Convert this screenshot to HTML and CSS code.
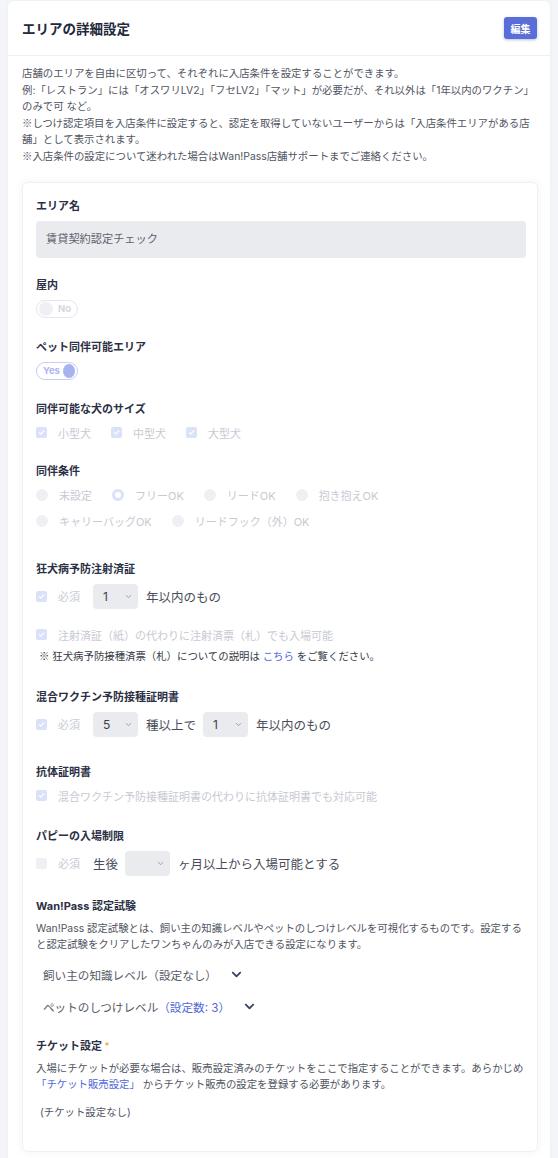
FILE: index.html
```html
<!DOCTYPE html>
<html lang="ja">
<head>
    <meta charset="UTF-8">
    <meta name="viewport" content="width=device-width, initial-scale=1.0">
    <title>エリアの詳細設定</title>
    <link rel="stylesheet" href="styles.css">
</head>
<body>

<div class="panel">
    <div class="panel-header">
        <h1 class="panel-title">エリアの詳細設定</h1>
        <button class="edit-button">編集</button>
    </div>

    <div class="panel-body">
        <p class="intro">
            店舗のエリアを自由に区切って、それぞれに入店条件を設定することができます。<br>
            例:「レストラン」には「オスワリLV2」「フセLV2」「マット」が必要だが、それ以外は「1年以内のワクチン」のみで可 など。<br>
            <span class="kome">※</span>しつけ認定項目を入店条件に設定すると、認定を取得していないユーザーからは「入店条件エリアがある店舗」として表示されます。<br>
            <span class="kome">※</span>入店条件の設定について迷われた場合はWan!Pass店舗サポートまでご連絡ください。
        </p>

        <div class="form-card">
            <div class="field first">
                <div class="field-label">エリア名</div>
                <div class="text-input">賃貸契約認定チェック</div>
            </div>

            <div class="field after-input">
                <div class="field-label">屋内</div>
                <div class="toggle off"><span class="knob"></span><span class="toggle-text">No</span></div>
            </div>

            <div class="field">
                <div class="field-label">ペット同伴可能エリア</div>
                <div class="toggle on"><span class="toggle-text">Yes</span><span class="knob"></span></div>
            </div>

            <div class="field">
                <div class="field-label">同伴可能な犬のサイズ</div>
                <div class="option-row">
                    <span class="option"><span class="checkbox checked"><svg viewBox="0 0 12 12"><path d="M3 6.2l2 2 4-4.2" /></svg></span>小型犬</span>
                    <span class="option"><span class="checkbox checked"><svg viewBox="0 0 12 12"><path d="M3 6.2l2 2 4-4.2" /></svg></span>中型犬</span>
                    <span class="option"><span class="checkbox checked"><svg viewBox="0 0 12 12"><path d="M3 6.2l2 2 4-4.2" /></svg></span>大型犬</span>
                </div>
            </div>

            <div class="field">
                <div class="field-label">同伴条件</div>
                <div class="option-row">
                    <span class="option"><span class="radio"></span>未設定</span>
                    <span class="option"><span class="radio selected"></span>フリーOK</span>
                    <span class="option"><span class="radio"></span>リードOK</span>
                    <span class="option"><span class="radio"></span>抱き抱えOK</span>
                </div>
                <div class="option-row second">
                    <span class="option"><span class="radio"></span>キャリーバッグOK</span>
                    <span class="option"><span class="radio"></span>リードフック（外）OK</span>
                </div>
            </div>

            <div class="field wide">
                <div class="field-label">狂犬病予防注射済証</div>
                <div class="select-row">
                    <span class="option"><span class="checkbox checked"><svg viewBox="0 0 12 12"><path d="M3 6.2l2 2 4-4.2" /></svg></span>必須</span>
                    <span class="select">1<svg viewBox="0 0 10 6"><path d="M1.5 1.2l3.5 3.5 3.5-3.5" /></svg></span>
                    <span class="select-text">年以内のもの</span>
                </div>
                <div class="option-row check-line">
                    <span class="option"><span class="checkbox checked"><svg viewBox="0 0 12 12"><path d="M3 6.2l2 2 4-4.2" /></svg></span>注射済証（紙）の代わりに注射済票（札）でも入場可能</span>
                </div>
                <p class="note"><span class="kome">※</span> 狂犬病予防接種済票（札）についての説明は <a href="#" class="link">こちら</a> をご覧ください。</p>
            </div>

            <div class="field after-note">
                <div class="field-label">混合ワクチン予防接種証明書</div>
                <div class="select-row">
                    <span class="option"><span class="checkbox checked"><svg viewBox="0 0 12 12"><path d="M3 6.2l2 2 4-4.2" /></svg></span>必須</span>
                    <span class="select">5<svg viewBox="0 0 10 6"><path d="M1.5 1.2l3.5 3.5 3.5-3.5" /></svg></span>
                    <span class="select-text">種以上で</span>
                    <span class="select">1<svg viewBox="0 0 10 6"><path d="M1.5 1.2l3.5 3.5 3.5-3.5" /></svg></span>
                    <span class="select-text">年以内のもの</span>
                </div>
            </div>

            <div class="field after-select">
                <div class="field-label">抗体証明書</div>
                <div class="option-row">
                    <span class="option"><span class="checkbox checked"><svg viewBox="0 0 12 12"><path d="M3 6.2l2 2 4-4.2" /></svg></span>混合ワクチン予防接種証明書の代わりに抗体証明書でも対応可能</span>
                </div>
            </div>

            <div class="field after-check">
                <div class="field-label">パピーの入場制限</div>
                <div class="select-row">
                    <span class="option"><span class="checkbox"></span>必須</span>
                    <span class="select-text">生後</span>
                    <span class="select"><svg viewBox="0 0 10 6"><path d="M1.5 1.2l3.5 3.5 3.5-3.5" /></svg></span>
                    <span class="select-text">ヶ月以上から入場可能とする</span>
                </div>
            </div>

            <div class="field after-puppy">
                <div class="field-label">Wan!Pass 認定試験</div>
                <p class="help">Wan!Pass 認定試験とは、飼い主の知識レベルやペットのしつけレベルを可視化するものです。設定すると認定試験をクリアしたワンちゃんのみが入店できる設定になります。</p>
                <div class="level">飼い主の知識レベル（設定なし）<svg class="chevron" viewBox="0 0 448 512"><path d="M207 381.5L12.7 187.1c-9.4-9.4-9.4-24.6 0-33.9l22.7-22.7c9.4-9.4 24.5-9.4 33.9 0L224 284.5l154.7-154c9.4-9.3 24.5-9.3 33.9 0l22.7 22.7c9.4 9.4 9.4 24.6 0 33.9L241 381.5c-9.4 9.4-24.6 9.4-34 0z"/></svg></div>
                <div class="level">ペットのしつけレベル<span class="level-count">（設定数: 3）</span><svg class="chevron" viewBox="0 0 448 512"><path d="M207 381.5L12.7 187.1c-9.4-9.4-9.4-24.6 0-33.9l22.7-22.7c9.4-9.4 24.5-9.4 33.9 0L224 284.5l154.7-154c9.4-9.3 24.5-9.3 33.9 0l22.7 22.7c9.4 9.4 9.4 24.6 0 33.9L241 381.5c-9.4 9.4-24.6 9.4-34 0z"/></svg></div>
            </div>

            <div class="field">
                <div class="field-label">チケット設定 <span class="required">*</span></div>
                <p class="help">入場にチケットが必要な場合は、販売設定済みのチケットをここで指定することができます。あらかじめ<a href="#" class="link">「チケット販売設定」</a> からチケット販売の設定を登録する必要があります。</p>
                <p class="empty">(チケット設定なし)</p>
            </div>
        </div>
    </div>
</div>

</body>
</html>
```

FILE: styles.css
```css
body {
    margin: 0;
    padding: 1px 8px 0;
    background-color: #f4f5f9;
    font-family: Inter, "Noto Sans CJK JP", sans-serif;
    color: #4b505c;
}
.kome {
    font-family: "Noto Sans CJK JP", sans-serif;
    line-height: 1;
}
.panel {
    background-color: #fff;
    border-radius: 6px;
    box-shadow: 0 0 4px rgba(0, 0, 0, 0.04);
}
.panel-header {
    display: flex;
    justify-content: space-between;
    align-items: center;
    height: 54px;
    padding: 0 13px 0 14px;
    border-bottom: 1px solid #eff0f4;
}
.panel-title {
    margin: 0;
    font-size: 13.5px;
    font-weight: bold;
    color: #23283a;
}
.edit-button {
    width: 33px;
    height: 22px;
    padding: 0;
    border: none;
    border-radius: 3px;
    background-color: #5a6ed8;
    color: #fff;
    font-family: inherit;
    font-size: 10px;
    font-weight: bold;
    box-shadow: 0 1px 3px rgba(40, 50, 120, 0.3);
}
.panel-body {
    padding: 10px 10px 14px 14px;
}
.intro {
    margin: 0 0 16px;
    font-size: 10.4px;
    line-height: 16.6px;
    color: #50555f;
}
.form-card {
    border: 1px solid #eef0f3;
    border-radius: 6px;
    padding: 15px 11px 30px 13px;
    margin-right: 2px;
    box-shadow: 0 0 10px rgba(0, 0, 0, 0.05);
}
.field {
    margin-top: 21px;
}
.field.first {
    margin-top: 0;
}
.field.after-input {
    margin-top: 19px;
}
.field.wide {
    margin-top: 31px;
}
.field.after-note {
    margin-top: 24px;
}
.field.after-select {
    margin-top: 27px;
}
.field.after-check {
    margin-top: 23px;
}
.field.after-puppy {
    margin-top: 22px;
}
.field-label {
    font-size: 11px;
    font-weight: bold;
    line-height: 16px;
    color: #2b3044;
    margin-bottom: 7px;
}
.required {
    color: #f5a94a;
    font-size: 9px;
    vertical-align: 1px;
}
.text-input {
    height: 37px;
    line-height: 37px;
    padding: 0 10px;
    background-color: #e9ebef;
    border-radius: 4px;
    font-size: 11.2px;
    color: #5e636d;
}
.toggle {
    display: flex;
    align-items: center;
    gap: 5px;
    box-sizing: border-box;
    width: 42px;
    height: 18px;
    padding: 0 2px;
    border-radius: 9px;
    border: 1px solid #e4e6eb;
    font-size: 9.5px;
    font-weight: bold;
}
.toggle .knob {
    width: 14px;
    height: 14px;
    border-radius: 50%;
    background-color: #eef0f3;
}
.toggle.off .toggle-text {
    color: #d3d6dc;
}
.toggle.on {
    border-color: #c8cef6;
    padding-left: 6px;
    gap: 3px;
}
.toggle.on .toggle-text {
    color: #adb6ef;
}
.toggle.on .knob {
    background-color: #a9b3ef;
}
.option-row {
    display: flex;
    flex-wrap: wrap;
    gap: 20px;
    height: 18px;
    align-items: center;
}
.option-row.second {
    margin-top: 8px;
}
.option-row.check-line {
    margin-top: 17px;
}
.option {
    display: flex;
    align-items: center;
    gap: 11px;
    font-size: 11px;
    color: #c7cad2;
}
.checkbox {
    display: flex;
    align-items: center;
    justify-content: center;
    width: 11px;
    height: 11px;
    border-radius: 2px;
    background-color: #eef0f3;
}
.checkbox.checked {
    background-color: #dce1fa;
}
.checkbox svg {
    width: 9px;
    height: 9px;
    fill: none;
    stroke: #fff;
    stroke-width: 1.6;
    stroke-linecap: round;
    stroke-linejoin: round;
}
.radio {
    box-sizing: border-box;
    width: 12px;
    height: 12px;
    border-radius: 50%;
    background-color: #eef0f3;
}
.radio.selected {
    background-color: #fff;
    border: 3.5px solid #dce1fa;
}
.select-row {
    display: flex;
    align-items: center;
    height: 25px;
    margin-top: 2px;
}
.select-row .option {
    width: 57px;
}
.select {
    display: flex;
    align-items: center;
    justify-content: space-between;
    box-sizing: border-box;
    width: 45px;
    height: 25px;
    padding: 0 4px 0 10px;
    margin-right: 8px;
    background-color: #e9ebef;
    border-radius: 4px;
    font-size: 12px;
    color: #3a3f4b;
}
.select svg {
    width: 7px;
    height: 5px;
    margin-left: auto;
    margin-right: 2px;
    fill: none;
    stroke: #8a8f99;
    stroke-width: 1.2;
}
.select-text {
    font-size: 12.5px;
    color: #474c58;
    margin-right: 7px;
}
.note {
    margin: 5px 0 0 3px;
    font-size: 10.4px;
    line-height: 16px;
    color: #353a46;
}
.link {
    color: #5068d8;
    text-decoration: none;
}
.help {
    margin: 6px 0 0;
    font-size: 10.4px;
    line-height: 16px;
    color: #50555f;
}
.level {
    display: flex;
    align-items: center;
    height: 20px;
    margin-top: 12px;
    padding-left: 7px;
    font-size: 11.6px;
    color: #555a66;
}
.level-count {
    color: #5068d8;
}
.chevron {
    width: 11px;
    height: 11px;
    margin-left: 14px;
    fill: #3a4360;
}
.empty {
    margin: 12px 0 0 4px;
    font-size: 10.4px;
    line-height: 16px;
    color: #50555f;
}
```
